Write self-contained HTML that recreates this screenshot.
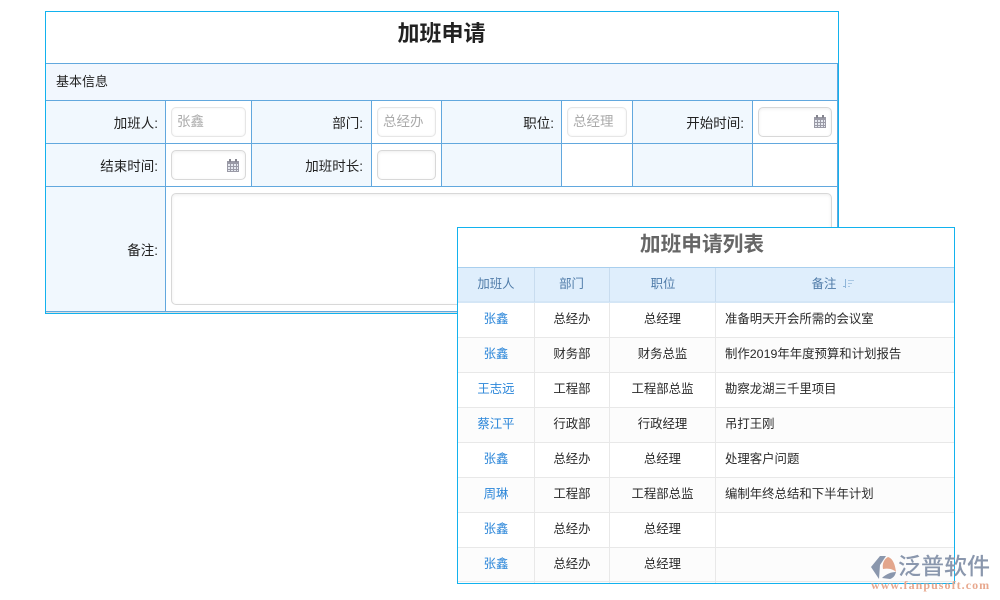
<!DOCTYPE html>
<html lang="zh"><head><meta charset="utf-8"><title>加班申请</title>
<style>
html,body{margin:0;padding:0;background:#fff}
body{width:1000px;height:600px;position:relative;overflow:hidden;font-family:"Liberation Sans","Noto Sans CJK SC",sans-serif;font-size:13px;color:#222}
div{position:absolute;box-sizing:border-box}
.h{height:1px;background:#62a8de}
.v{width:1px;background:#62a8de}
.bg{background:#f1f8fe}
.lb{text-align:right;line-height:20px;height:20px;color:#222;font-size:13.5px}
.in{background:#fff;border:1px solid #e6e6e6;border-radius:5px;color:#aaa;line-height:27px;padding-left:5px;box-shadow:inset 0 0 2px #f0f0f0;font-size:13.5px}
.in.d{border-color:#d8d8d8;box-shadow:inset 0 1px 3px #eee}
.c{text-align:center;line-height:20px;height:20px;color:#2a2a2a;font-size:12.4px}
.a{color:#2b86d9}
.t{line-height:20px;height:20px;color:#2a2a2a;left:725px;width:225px;white-space:nowrap;font-size:12.4px}
.hc{text-align:center;line-height:20px;height:20px;color:#4f7ba8;top:274px;font-size:12.4px}
.rl{height:1px;background:#e8e8e8;left:458px;width:496px}
.cl{width:1px;background:#e8e8e8;top:303px;height:280px}
.hv{width:1px;background:#c8dcef;top:268px;height:34px}
svg{position:absolute}
</style></head><body>

<div style="left:45px;top:11px;width:794px;height:303px;border:1px solid #12b2ee;border-bottom:0"></div>
<div style="left:45px;top:313px;width:794px;height:1px;background:#12b2ee"></div>
<div style="left:46px;top:311px;width:792px;height:1px;background:#62a8de"></div>
<div style="left:46px;top:312px;width:792px;height:1px;background:#ddd"></div>
<div style="left:46px;top:16px;width:791px;height:36px;text-align:center;font-size:22px;font-weight:bold;line-height:36px;color:#222">加班申请</div>

<div style="left:46px;top:64px;width:791px;height:36px;background:#f2f7fe"></div>
<div style="left:46px;top:101px;width:119px;height:210px" class="bg"></div>
<div style="left:252px;top:101px;width:119px;height:85px" class="bg"></div>
<div style="left:442px;top:101px;width:119px;height:85px" class="bg"></div>
<div style="left:633px;top:101px;width:119px;height:85px" class="bg"></div>
<div style="top:72px;width:200px;line-height:20px;height:20px;left:56px;color:#222">基本信息</div>

<div class="h" style="left:46px;top:63px;width:792px"></div>
<div class="h" style="left:46px;top:100px;width:792px"></div>
<div class="h" style="left:46px;top:143px;width:792px"></div>
<div class="h" style="left:46px;top:186px;width:792px"></div>
<div class="v" style="left:837px;top:64px;height:248px"></div>
<div class="v" style="left:165px;top:100px;height:212px"></div>
<div class="v" style="left:251px;top:100px;height:86px"></div>
<div class="v" style="left:371px;top:100px;height:86px"></div>
<div class="v" style="left:441px;top:100px;height:86px"></div>
<div class="v" style="left:561px;top:100px;height:86px"></div>
<div class="v" style="left:632px;top:100px;height:86px"></div>
<div class="v" style="left:752px;top:100px;height:86px"></div>

<div class="lb" style="left:60px;width:98px;top:114px">加班人:</div>
<div class="lb" style="left:262px;width:101px;top:114px">部门:</div>
<div class="lb" style="left:452px;width:102px;top:114px">职位:</div>
<div class="lb" style="left:640px;width:104px;top:114px">开始时间:</div>
<div class="lb" style="left:60px;width:98px;top:157px">结束时间:</div>
<div class="lb" style="left:262px;width:101px;top:157px">加班时长:</div>
<div class="lb" style="left:60px;width:98px;top:241px">备注:</div>

<div class="in" style="left:171px;top:107px;width:75px;height:30px">张鑫</div>
<div class="in" style="left:377px;top:107px;width:59px;height:30px">总经办</div>
<div class="in" style="left:567px;top:107px;width:60px;height:30px">总经理</div>
<div class="in d" style="left:758px;top:107px;width:74px;height:30px"></div>
<div class="in d" style="left:171px;top:150px;width:75px;height:30px"></div>
<div class="in d" style="left:377px;top:150px;width:59px;height:30px"></div>
<div class="in d" style="left:171px;top:193px;width:661px;height:112px"></div>

<svg style="left:814px;top:115px" width="12" height="13" viewBox="0 0 12 13"><path d="M0 2h12v11H0z" fill="#9a9aa6"/><path d="M1 5h2v2H1zM4 5h2v2H4zM7 5h2v2H7zM10 5h1v2h-1zM1 8h2v2H1zM4 8h2v2H4zM7 8h2v2H7zM10 8h1v2h-1zM1 11h2v1H1zM4 11h2v1H4zM7 11h2v1H7zM10 11h1v1h-1z" fill="#e6e9f0"/><path d="M2 0h2v3H2zM8 0h2v3H8z" fill="#85858f"/></svg>
<svg style="left:227px;top:159px" width="12" height="13" viewBox="0 0 12 13"><path d="M0 2h12v11H0z" fill="#9a9aa6"/><path d="M1 5h2v2H1zM4 5h2v2H4zM7 5h2v2H7zM10 5h1v2h-1zM1 8h2v2H1zM4 8h2v2H4zM7 8h2v2H7zM10 8h1v2h-1zM1 11h2v1H1zM4 11h2v1H4zM7 11h2v1H7zM10 11h1v1h-1z" fill="#e6e9f0"/><path d="M2 0h2v3H2zM8 0h2v3H8z" fill="#85858f"/></svg>

<div style="left:457px;top:227px;width:498px;height:357px;background:#fff;border:1px solid #12b2ee"></div>
<div style="left:458px;top:227px;width:488px;height:38px;text-align:center;font-size:20.7px;font-weight:bold;line-height:35px;color:#666">加班申请列表</div>
<div style="left:458px;top:267px;width:496px;height:36px;background:#dfeefc;border-top:1px solid #a9cfee;border-bottom:2px solid #d4e6f6"></div>
<div class="hv" style="left:534px"></div>
<div class="hv" style="left:609px"></div>
<div class="hv" style="left:715px"></div>
<div class="hc" style="left:458px;width:76px">加班人</div>
<div class="hc" style="left:534px;width:75px">部门</div>
<div class="hc" style="left:610px;width:106px">职位</div>
<div class="hc" style="left:716px;width:216px">备注</div>
<svg style="left:843px;top:279px" width="12" height="10" viewBox="0 0 12 10"><path d="M2 0h1v9H2zM0 7h2v1H0z" fill="#8fb6da"/><path d="M5 1h6v1H5zM5 4h4v1H5zM5 7h2v1H5z" fill="#a9c8e4"/></svg>

<div style="left:458px;top:338px;width:496px;height:35px;background:#fcfcfc"></div>
<div style="left:458px;top:408px;width:496px;height:35px;background:#fcfcfc"></div>
<div style="left:458px;top:478px;width:496px;height:35px;background:#fcfcfc"></div>
<div style="left:458px;top:548px;width:496px;height:35px;background:#fcfcfc"></div>

<div class="rl" style="top:337px"></div>
<div class="rl" style="top:372px"></div>
<div class="rl" style="top:407px"></div>
<div class="rl" style="top:442px"></div>
<div class="rl" style="top:477px"></div>
<div class="rl" style="top:512px"></div>
<div class="rl" style="top:547px"></div>
<div class="rl" style="top:581px"></div>
<div class="cl" style="left:534px"></div>
<div class="cl" style="left:609px"></div>
<div class="cl" style="left:715px"></div>

<div class="c a" style="left:458px;width:76px;top:309px">张鑫</div><div class="c" style="left:535px;width:74px;top:309px">总经办</div><div class="c" style="left:610px;width:105px;top:309px">总经理</div><div class="t" style="top:309px">准备明天开会所需的会议室</div>
<div class="c a" style="left:458px;width:76px;top:344px">张鑫</div><div class="c" style="left:535px;width:74px;top:344px">财务部</div><div class="c" style="left:610px;width:105px;top:344px">财务总监</div><div class="t" style="top:344px">制作2019年年度预算和计划报告</div>
<div class="c a" style="left:458px;width:76px;top:379px">王志远</div><div class="c" style="left:535px;width:74px;top:379px">工程部</div><div class="c" style="left:610px;width:105px;top:379px">工程部总监</div><div class="t" style="top:379px">勘察龙湖三千里项目</div>
<div class="c a" style="left:458px;width:76px;top:414px">蔡江平</div><div class="c" style="left:535px;width:74px;top:414px">行政部</div><div class="c" style="left:610px;width:105px;top:414px">行政经理</div><div class="t" style="top:414px">吊打王刚</div>
<div class="c a" style="left:458px;width:76px;top:449px">张鑫</div><div class="c" style="left:535px;width:74px;top:449px">总经办</div><div class="c" style="left:610px;width:105px;top:449px">总经理</div><div class="t" style="top:449px">处理客户问题</div>
<div class="c a" style="left:458px;width:76px;top:484px">周琳</div><div class="c" style="left:535px;width:74px;top:484px">工程部</div><div class="c" style="left:610px;width:105px;top:484px">工程部总监</div><div class="t" style="top:484px">编制年终总结和下半年计划</div>
<div class="c a" style="left:458px;width:76px;top:519px">张鑫</div><div class="c" style="left:535px;width:74px;top:519px">总经办</div><div class="c" style="left:610px;width:105px;top:519px">总经理</div>
<div class="c a" style="left:458px;width:76px;top:554px">张鑫</div><div class="c" style="left:535px;width:74px;top:554px">总经办</div><div class="c" style="left:610px;width:105px;top:554px">总经理</div>

<svg style="left:871px;top:556px" width="25" height="25" viewBox="0 0 25 25"><path d="M9 0h6L9 9 8 23 0 11z" fill="#8a97ad"/><path d="M17 1c4 1 7 6 8 15-3-3-8-4-13-3-1-5 1-10 5-12z" fill="#e3a68c"/><path d="M11 22c3-3 8-6 14-6-1 4-3 6-6 7z" fill="#8a97ad"/></svg>
<div style="left:898px;top:552px;width:100px;height:28px;font-size:23px;line-height:28px;color:#8a97ad;white-space:nowrap;font-weight:500">泛普软件</div>
<div style="left:871px;top:578px;width:125px;height:14px;font-family:'Liberation Serif',serif;font-size:12px;line-height:14px;letter-spacing:1.05px;font-weight:bold;color:#e8a88e;white-space:nowrap">www.fanpusoft.com</div>
</body></html>
